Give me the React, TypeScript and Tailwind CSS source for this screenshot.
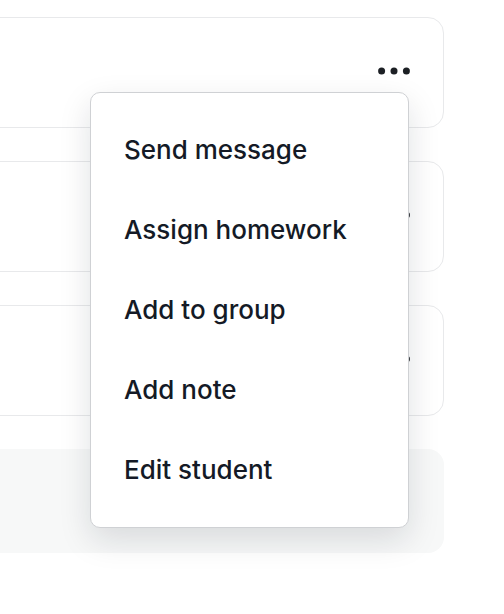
import React from "react";

const items = ["Send message", "Assign homework", "Add to group", "Add note", "Edit student"];

function Dots() {
  return (
    <svg width="32" height="8" viewBox="0 0 32 8" className="block text-[#1c1f24]">
      <circle cx="3.6" cy="4" r="3.5" fill="currentColor" />
      <circle cx="16" cy="4" r="3.5" fill="currentColor" />
      <circle cx="28.4" cy="4" r="3.5" fill="currentColor" />
    </svg>
  );
}

function StudentCard({ open = false }: { open?: boolean }) {
  return (
    <div className="h-[111px] rounded-2xl border border-[#e8e9eb] bg-white flex items-center justify-end pr-[33px]">
      <div className="relative mt-[-3px]">
        <button className="block">
          <Dots />
        </button>
        {open && (
          <div className="absolute right-[1px] top-[25px] z-10 w-[319px] rounded-[10px] border border-[#cfd1d4] bg-white pt-4 pb-[18px] shadow-[0_12px_32px_rgba(15,23,42,0.13)]">
            {items.map((label) => (
              <div
                key={label}
                className="h-20 flex items-center px-[33px] text-[26px] font-medium text-[#141a26]"
              >
                {label}
              </div>
            ))}
          </div>
        )}
      </div>
    </div>
  );
}

export default function App() {
  return (
    <div className="min-h-[614px] bg-white overflow-hidden pt-[17px] font-['Inter',sans-serif]">
      <div className="-ml-10 w-[484px] flex flex-col gap-[33px]">
        <StudentCard open />
        <StudentCard />
        <StudentCard />
        <div className="h-[104px] rounded-2xl bg-[#f7f8f8]" />
      </div>
    </div>
  );
}
